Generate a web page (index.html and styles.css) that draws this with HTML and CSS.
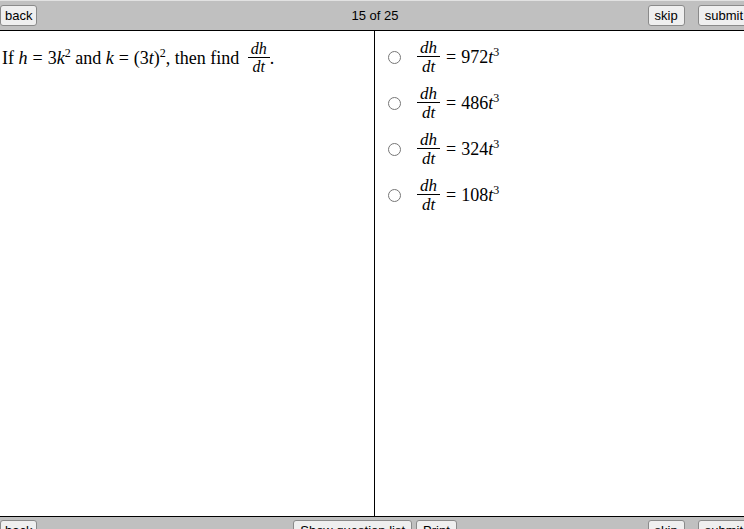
FILE: index.html
```html
<!DOCTYPE html>
<html lang="en">
<head>
  <meta charset="UTF-8">
  <title>Question 15 of 25</title>
  <link rel="stylesheet" href="styles.css">
</head>
<body>

  <div class="frame">
    <div class="bar top">
      <div class="left"><button>back</button></div>
      <span class="counter">15 of 25</span>
      <div class="right"><button>skip</button><button>submit</button></div>
    </div>

    <div class="panes">
      <div class="question">
        If <i>h</i><span class="eq">=</span>3<i>k</i><sup>2</sup> and <i>k</i><span class="eq">=</span>(3<i>t</i>)<sup>2</sup>, then find
        <span class="frac small"><span><i>dh</i></span><span><i>dt</i></span></span>.
      </div>

      <div class="answers">
        <label class="option">
          <input type="radio" name="ans">
          <span class="frac"><span><i>dh</i></span><span><i>dt</i></span></span>
          <span class="rhs"><span class="eq">=</span>972<i>t</i><sup>3</sup></span>
        </label>
        <label class="option">
          <input type="radio" name="ans">
          <span class="frac"><span><i>dh</i></span><span><i>dt</i></span></span>
          <span class="rhs"><span class="eq">=</span>486<i>t</i><sup>3</sup></span>
        </label>
        <label class="option">
          <input type="radio" name="ans">
          <span class="frac"><span><i>dh</i></span><span><i>dt</i></span></span>
          <span class="rhs"><span class="eq">=</span>324<i>t</i><sup>3</sup></span>
        </label>
        <label class="option">
          <input type="radio" name="ans">
          <span class="frac"><span><i>dh</i></span><span><i>dt</i></span></span>
          <span class="rhs"><span class="eq">=</span>108<i>t</i><sup>3</sup></span>
        </label>
      </div>
    </div>

    <div class="bar bottom">
      <div class="left"><button>back</button></div>
      <div class="middle"><button>Show question list</button><button>Print</button></div>
      <div class="right"><button>skip</button><button>submit</button></div>
    </div>
  </div>

</body>
</html>
```

FILE: styles.css
```css
html, body {
  margin: 0;
  overflow: hidden;
  background: #fff;
}

.frame {
  width: 750px;
  display: flex;
  flex-direction: column;
  font-family: 'Liberation Sans', Arial, sans-serif;
  font-size: 13px;
}

.bar {
  display: grid;
  grid-template-columns: 1fr auto 1fr;
  align-items: center;
  background: #c0c0c0;
}

.bar.top {
  height: 31px;
  border-top: 1px solid #e2e2e2;
  border-bottom: 1px solid #000;
  box-sizing: border-box;
}

.bar.bottom {
  border-top: 1px solid #000;
  height: 30px;
  align-items: start;
  padding-top: 3px;
  box-sizing: border-box;
}

.right {
  display: flex;
  justify-content: flex-end;
  gap: 13px;
}

.middle {
  display: flex;
  gap: 4px;
}

button {
  font-family: 'Liberation Sans', Arial, sans-serif;
  font-size: 13px;
  color: #000;
  background: #efefef;
  border: 1px solid #8a8a8a;
  border-radius: 3px;
  padding: 2px 6px;
  height: 21px;
  line-height: 15px;
}

.left button {
  padding: 2px 4px;
}

.counter {
  color: #000;
}

.panes {
  height: 485px;
  display: flex;
}

.question {
  width: 375px;
  border-right: 1px solid #000;
  padding: 12px 2px;
  box-sizing: border-box;
  font-family: 'Liberation Serif', 'Times New Roman', serif;
  font-size: 18px;
  line-height: 30px;
}

.eq {
  margin: 0 5px;
}

sup {
  font-size: 12px;
  vertical-align: 7px;
  line-height: 0;
}

.frac {
  display: inline-flex;
  flex-direction: column;
  align-items: center;
  vertical-align: middle;
  font-family: 'Liberation Serif', 'Times New Roman', serif;
  font-size: 17px;
  line-height: 15px;
}

.frac span:first-child {
  border-bottom: 1px solid #000;
  padding: 0 3px 1px;
}

.frac span:last-child {
  padding-top: 2px;
}

.frac.small {
  font-size: 16px;
  line-height: 14px;
  margin: -4px 0 0 4px;
}

.answers {
  flex: 1;
  padding: 3px 0 0 13px;
  font-family: 'Liberation Serif', 'Times New Roman', serif;
  font-size: 18px;
}

.option {
  display: flex;
  align-items: center;
  height: 46px;
}

.option input {
  margin: 0 16px 0 0;
  width: 13px;
  height: 13px;
}

.rhs .eq {
  margin: 0 5px 0 6px;
}
```
